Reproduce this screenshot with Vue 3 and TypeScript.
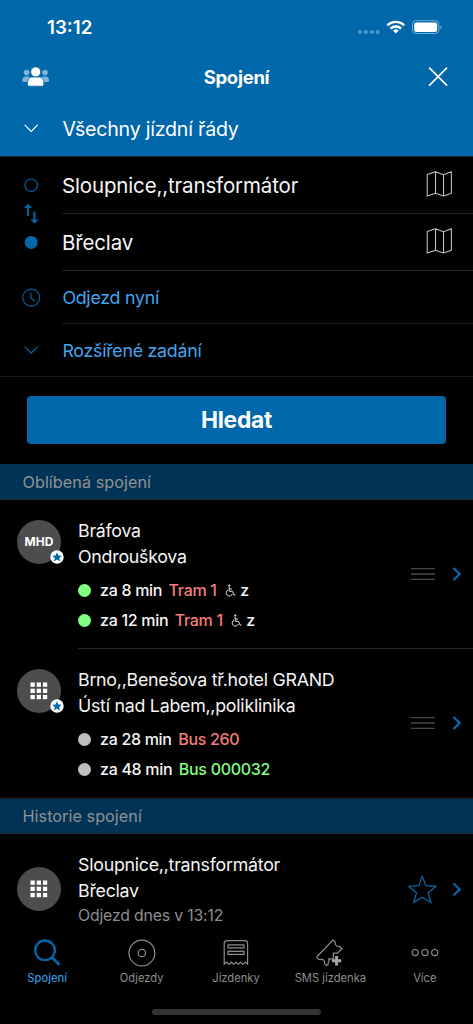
<script setup lang="ts">
interface Departure {
  wait: string
  line: string
  lineTone: 'red' | 'green'
  live: boolean
  accessible: boolean
}

interface Favourite {
  from: string
  to: string
  kind: 'mhd' | 'grid'
  departures: Departure[]
}

interface Tab {
  id: string
  label: string
}

const stops: string[] = ['Sloupnice,,transformátor', 'Břeclav']

const favourites: Favourite[] = [
  {
    from: 'Bráfova',
    to: 'Ondrouškova',
    kind: 'mhd',
    departures: [
      { wait: 'za 8 min', line: 'Tram 1', lineTone: 'red', live: true, accessible: true },
      { wait: 'za 12 min', line: 'Tram 1', lineTone: 'red', live: true, accessible: true },
    ],
  },
  {
    from: 'Brno,,Benešova tř.hotel GRAND',
    to: 'Ústí nad Labem,,poliklinika',
    kind: 'grid',
    departures: [
      { wait: 'za 28 min', line: 'Bus 260', lineTone: 'red', live: false, accessible: false },
      { wait: 'za 48 min', line: 'Bus 000032', lineTone: 'green', live: false, accessible: false },
    ],
  },
]

const tabs: Tab[] = [
  { id: 'search', label: 'Spojení' },
  { id: 'departures', label: 'Odjezdy' },
  { id: 'tickets', label: 'Jízdenky' },
  { id: 'sms', label: 'SMS jízdenka' },
  { id: 'more', label: 'Více' },
]

const cells: number[] = [0, 6.2, 12.4]
</script>

<template>
  <div class="screen">
    <header class="header">
      <div class="status">
        <span class="clock">13:12</span>
        <svg class="status-icons" width="86" height="18" viewBox="0 0 86 18">
          <g fill="#fff" fill-opacity=".3">
            <circle cx="3" cy="14" r="2.1" /><circle cx="8.9" cy="14" r="2.1" />
            <circle cx="14.8" cy="14" r="2.1" /><circle cx="20.7" cy="14" r="2.1" />
          </g>
          <g fill="none" stroke="#fff" stroke-width="2.4">
            <path d="M30.4 7.3a12 12 0 0 1 16.8 0" />
            <path d="M33.5 10.6a7.6 7.6 0 0 1 10.6 0" />
          </g>
          <path d="M35.9 12.6a4.2 4.2 0 0 1 5.8 0L38.8 15.6z" fill="#fff" />
          <rect x="55.5" y="2.7" width="26.4" height="12.8" rx="3.6" fill="none" stroke="#fff" stroke-opacity=".45" />
          <rect x="57.2" y="4.4" width="23" height="9.5" rx="2.2" fill="#fff" />
          <path d="M83.4 7.2c1.6.6 1.6 3.3 0 3.9z" fill="#fff" fill-opacity=".5" />
        </svg>
      </div>
      <div class="titlebar">
        <svg class="people" width="28" height="20" viewBox="0 0 28 20">
          <g fill="#fff" fill-opacity=".5">
            <circle cx="4.6" cy="5.6" r="2.8" /><circle cx="23" cy="5.6" r="2.8" />
            <path d="M.4 13.3c0-2.2 1.4-3.8 3.4-3.8h3.4v5.4H1.6c-.9 0-1.2-.7-1.2-1.6zM27 13.3c0-2.2-1.4-3.8-3.4-3.8h-3.4v5.4h5.6c.9 0 1.2-.7 1.2-1.6z" />
          </g>
          <g fill="#fff" stroke="#0067ab" stroke-width=".8">
            <path d="M5.5 17c0-4.5 1.6-7 4.7-7h7c3.1 0 4.7 2.5 4.7 7 0 1.7-.6 2.2-1.8 2.2H7.3c-1.2 0-1.8-.5-1.8-2.2z" />
            <circle cx="13.7" cy="4.9" r="5" />
          </g>
        </svg>
        <span class="title">Spojení</span>
        <svg class="close" width="20" height="20" viewBox="0 0 20 20">
          <path d="M1.1.6 19.1 18.6M19.1.6 1.1 18.6" stroke="#fff" stroke-width="1.6" />
        </svg>
      </div>
      <div class="timetable">
        <span class="lead">
          <svg width="16" height="10" viewBox="0 0 16 10"><path d="M1.7 1.9 8.2 8.4l6.5-6.5" fill="none" stroke="#fff" stroke-width="1.2" /></svg>
        </span>
        <span class="big narrow">Všechny jízdní řády</span>
      </div>
    </header>

    <section class="form">
      <div class="rail">
        <svg width="18" height="74" viewBox="0 0 18 74">
          <circle cx="9.2" cy="9.2" r="6.2" fill="none" stroke="#0067ab" stroke-width="1.1" />
          <path d="M6 40V30.5M12.5 35.5V45" stroke="#0067ab" stroke-width="1.9" />
          <path d="M2 32 6 27.8 10 32zM8.4 43.5 12.5 47.5 16.6 43.5z" fill="#0067ab" />
          <circle cx="9.2" cy="66.4" r="6.5" fill="#0067ab" />
        </svg>
      </div>
      <div class="fields">
        <div v-for="stop in stops" :key="stop" class="field stop">
          <span class="big">{{ stop }}</span>
          <svg width="28" height="30" viewBox="0 0 28 30">
            <path d="M2.2 4.6 10.5 1.7l8 3 7.900-3v21.600l-7.900 2.800-8-2.800-8.300 2.800zM10.500 1.700v21.600M18.500 4.700V26" fill="none" stroke="#c2c2c2" stroke-width="1.05" stroke-linejoin="round" />
          </svg>
        </div>
      </div>
    </section>
    <div class="option">
      <span class="lead">
        <svg width="20" height="20" viewBox="0 0 20 20">
          <circle cx="10.2" cy="9.6" r="8.5" fill="none" stroke="#0067ab" stroke-width="1.1" />
          <path d="M9.9 5v5l3.500 3" fill="none" stroke="#0067ab" stroke-width="1.2" />
        </svg>
      </span>
      <span class="option-label">Odjezd nyní</span>
    </div>
    <div class="option last">
      <span class="lead">
        <svg width="16" height="10" viewBox="0 0 16 10"><path d="M1.7 1.7 8.2 8.2l6.500-6.500" fill="none" stroke="#0067ab" stroke-width="1.2" /></svg>
      </span>
      <span class="option-label">Rozšířené zadání</span>
    </div>

    <div class="action"><button class="submit">Hledat</button></div>

    <h2 class="section first">Oblíbená spojení</h2>
    <article v-for="(fav, i) in favourites" :key="fav.from" class="entry">
      <div class="avatar">
        <span v-if="fav.kind === 'mhd'" class="mhd">MHD</span>
        <svg v-else width="18" height="18" viewBox="0 0 18 18" fill="#fff">
          <template v-for="y in cells" :key="y">
            <rect v-for="x in cells" :key="x" :x="x + 0.5" :y="y + 0.5" width="4.3" height="4.3" />
          </template>
        </svg>
        <svg class="badge" width="14" height="14" viewBox="0 0 14 14">
          <circle cx="7" cy="7" r="6.7" fill="#fff" />
          <path d="M7 2.300 8.400 5.500l3.400.3-2.600 2.200.8 3.400L7 9.600l-3 1.800.8-3.400-2.600-2.200 3.400-.3z" fill="#0067ab" />
        </svg>
      </div>
      <div class="detail" :class="{ divided: i === 0 }">
        <div class="text">
          <p class="name">{{ fav.from }}</p>
          <p class="name">{{ fav.to }}</p>
          <div class="departures">
            <p v-for="dep in fav.departures" :key="dep.wait" class="departure">
              <i class="dot" :class="{ live: dep.live }"></i>
              <span class="wait">{{ dep.wait }}</span>
              <span class="line" :class="dep.lineTone">{{ dep.line }}</span>
              <template v-if="dep.accessible">
                <svg class="chair" width="11" height="13" viewBox="0 0 11 13" fill="none" stroke="#ddd" stroke-width="1">
                  <circle cx="4.2" cy="1.5" r=".7" fill="#ddd" />
                  <path d="M4.2 2.7V7.3H7.5L9 11h1.5M4.2 5H7M3 6a3.2 3.2 0 1 0 4.4 4" />
                </svg>
                <span>z</span>
              </template>
            </p>
          </div>
        </div>
        <svg class="handle" width="24" height="14" viewBox="0 0 24 14">
          <path d="M0 1.7h24M0 7h24M0 12.4h24" stroke="#484848" stroke-width="1.3" />
        </svg>
        <svg class="chevron" width="10" height="16" viewBox="0 0 10 16">
          <path d="M1.5 2 7.7 8 1.5 14" fill="none" stroke="#0072bd" stroke-width="2" />
        </svg>
      </div>
    </article>

    <h2 class="section second">Historie spojení</h2>
    <article class="entry history">
      <div class="avatar">
        <svg width="18" height="18" viewBox="0 0 18 18" fill="#fff">
          <template v-for="y in cells" :key="y">
            <rect v-for="x in cells" :key="x" :x="x + 0.5" :y="y + 0.5" width="4.3" height="4.3" />
          </template>
        </svg>
      </div>
      <div class="detail">
        <div class="text">
          <p class="name">Sloupnice,,transformátor</p>
          <p class="name">Břeclav</p>
          <p class="when">Odjezd dnes v 13:12</p>
        </div>
        <svg class="star" width="30" height="30" viewBox="0 0 30 30">
          <path d="M15.300 2.400 18.800 11.700 28.900 12.400 21.100 18.700 23.900 28.500 15.300 23.200 6.700 28.500 9.500 18.700 1.700 12.400 11.800 11.700z" fill="none" stroke="#0b69ae" stroke-width="1.2" />
        </svg>
        <svg class="chevron" width="10" height="16" viewBox="0 0 10 16">
          <path d="M1.5 2.400 7.700 8.400 1.500 14.400" fill="none" stroke="#0072bd" stroke-width="2" />
        </svg>
      </div>
    </article>

    <nav class="tabs">
      <a v-for="(tab, i) in tabs" :key="tab.id" class="tab" :class="{ active: i === 0 }">
        <svg width="30" height="30" viewBox="0 0 30 30" fill="none" stroke="#8c8c8c" stroke-width="1.2">
          <g v-if="tab.id === 'search'" stroke="#0067ab">
            <circle cx="13" cy="12.3" r="9.8" stroke-width="2.4" />
            <path d="M19.9 19.2 27.5 27" stroke-width="2.8" />
          </g>
          <g v-else-if="tab.id === 'departures'">
            <circle cx="14.9" cy="15" r="12.9" /><circle cx="14.9" cy="15" r="3.7" />
          </g>
          <g v-else-if="tab.id === 'tickets'">
            <path d="M3.200 26.200V5.300q0-2.700 2.700-2.700h18q2.700 0 2.700 2.700v20.900l-2-2.200-2.600 2.400-2.500-2.400-2.300 2.400-2.300-2.400-2.300 2.400-2.300-2.400-2.300 2.400-2.500-2.400z" />
            <path d="M7 6.800h16v3H7zM7 13.300h16v3H7z" />
          </g>
          <g v-else-if="tab.id === 'sms'">
            <path d="M12.600 27c-1.400.8-2.800-.2-3-2 .3-2.500-1.400-4-4-3.500-1.800.3-3.700-1-3.700-2.700L17.900 2.100l2.400 1.800c-.8 3.200 1.600 5.300 4.700 4.600l2.100 2.300-4.700 4.300h-4v5.700h-4.700l.3 2.400z" />
            <path d="M21.600 18v9.400M16.900 22.700h9.400" stroke="#a6a6a6" stroke-width="3" />
          </g>
          <g v-else>
            <circle cx="5.200" cy="14.600" r="3.1" /><circle cx="15" cy="14.600" r="3.1" /><circle cx="24.700" cy="14.600" r="3.1" />
          </g>
        </svg>
        <span class="tab-label">{{ tab.label }}</span>
      </a>
    </nav>
    <div class="home"></div>
  </div>
</template>

<style>
html,
body {
  margin: 0;
  background: #000;
}
</style>

<style scoped>
.screen {
  display: flex;
  flex-direction: column;
  width: 473px;
  height: 1024px;
  overflow: hidden;
  background: #000;
  color: #f5f5f5;
  font-family: Inter, 'Liberation Sans', sans-serif;
}
.screen > * {
  flex-shrink: 0;
}
svg {
  display: block;
  flex-shrink: 0;
}
p,
h2 {
  margin: 0;
  font-weight: 400;
}
.header {
  box-sizing: border-box;
  height: 157px;
  background: #0067ab;
  border-bottom: 1px solid #1f2f3a;
  color: #fff;
}
.status {
  display: flex;
  justify-content: space-between;
  align-items: center;
  height: 54px;
  padding: 0 30px 0 47px;
}
.clock {
  font-size: 18.7px;
  font-weight: 600;
}
.titlebar {
  display: flex;
  justify-content: space-between;
  align-items: center;
  height: 46px;
  padding: 0 25px 0 22px;
}
.title {
  margin-right: 5px;
  font-size: 18.5px;
  font-weight: 700;
  letter-spacing: -0.28px;
}
.timetable {
  display: flex;
  align-items: center;
  height: 56px;
}
.lead {
  display: flex;
  justify-content: center;
  width: 62px;
}
.big {
  font-size: 20.5px;
  letter-spacing: -0.15px;
  white-space: nowrap;
}
.big.narrow {
  margin-left: 0.5px;
  padding-top: 1px;
  font-size: 19.6px;
  letter-spacing: -0.22px;
}
.form {
  display: flex;
}
.rail {
  width: 40px;
  padding: 19px 0 0 22px;
}
.fields {
  flex: 1;
}
.field {
  display: flex;
  justify-content: space-between;
  align-items: center;
  height: 56px;
  padding-right: 20px;
  border-bottom: 1px solid #222;
}
.option {
  display: flex;
  align-items: center;
  height: 53px;
}
.option-label {
  flex: 1;
  height: 52px;
  line-height: 53px;
  border-bottom: 1px solid #1d1d1d;
  color: #42a5f0;
  font-size: 17.8px;
  letter-spacing: -0.26px;
  text-indent: 0.4px;
}
.option.last {
  border-bottom: 1px solid #1a1a1a;
  height: 52px;
}
.option.last .option-label {
  border-bottom: 0;
}
.action {
  padding: 19px 27px 20px;
}
.submit {
  display: block;
  width: 419px;
  height: 48px;
  padding: 0;
  border: 0;
  border-radius: 4px;
  background: #0067ab;
  color: #fff;
  font: 700 22.8px/48px Inter, 'Liberation Sans', sans-serif;
  letter-spacing: -0.3px;
}
.section {
  box-sizing: border-box;
  height: 36px;
  padding-left: 22.5px;
  border-bottom: 1px solid #1b2f3c;
  background: #003355;
  color: #929292;
  font-size: 16.2px;
  letter-spacing: 0.05px;
  line-height: 36px;
}
.section.second {
  height: 37px;
  border-top: 2px solid #161616;
  line-height: 35px;
}
.entry {
  display: flex;
  padding-left: 17px;
}
.avatar {
  position: relative;
  display: flex;
  align-items: center;
  justify-content: center;
  width: 44px;
  height: 44px;
  margin-top: 19.7px;
  border-radius: 50%;
  background: #4d4d4d;
}
.mhd {
  color: #fff;
  font-size: 12px;
  font-weight: 700;
}
.badge {
  position: absolute;
  right: -2.5px;
  bottom: -0.5px;
}
.detail {
  display: flex;
  flex: 1;
  align-items: center;
  height: 148px;
  margin-left: 17px;
}
.divided {
  border-bottom: 1px solid #272727;
}
.text {
  flex: 1;
  align-self: flex-start;
  padding-top: 18px;
}
.name {
  height: 26px;
  font-size: 17.8px;
  letter-spacing: -0.25px;
  line-height: 26px;
  white-space: nowrap;
}
.departures {
  padding-top: 5px;
}
.departure {
  display: flex;
  align-items: center;
  height: 30px;
  font-size: 16px;
  font-weight: 500;
  letter-spacing: -0.3px;
}
.dot {
  width: 13px;
  height: 13px;
  margin-right: 9px;
  border-radius: 50%;
  background: #bfbfbf;
}
.dot.live {
  background: #80ff80;
}
.line {
  margin-left: 6.5px;
}
.red {
  color: #f47c7c;
}
.green {
  color: #80ff80;
}
.chair {
  margin: 0 4.5px 0 8px;
}
.handle {
  margin-right: 17px;
}
.chevron {
  margin-right: 11px;
}
.history {
  height: 97px;
}
.history .avatar {
  margin-top: 33.4px;
}
.history .detail {
  height: 110px;
}
.history .name {
  height: 25.5px;
  line-height: 25.5px;
}
.when {
  color: #8e8e8e;
  font-size: 15.8px;
  letter-spacing: -0.16px;
  line-height: 25px;
}
.star {
  margin-right: 15px;
}
.tabs {
  display: flex;
  height: 77px;
  padding: 7px 1px 0 0;
  background: #000;
}
.tab {
  display: flex;
  flex: 1 1 0;
  flex-direction: column;
  align-items: center;
  min-width: 0;
}
.tab-label {
  margin-top: 2px;
  color: #8c8c8c;
  font-size: 11.2px;
  font-weight: 400;
  line-height: 16px;
  white-space: nowrap;
}
.active .tab-label {
  color: #2f93dd;
  font-weight: 500;
}
.home {
  width: 169px;
  height: 6px;
  margin: -6px 0 0 152px;
  border-radius: 3px;
  background: #333;
}
</style>
